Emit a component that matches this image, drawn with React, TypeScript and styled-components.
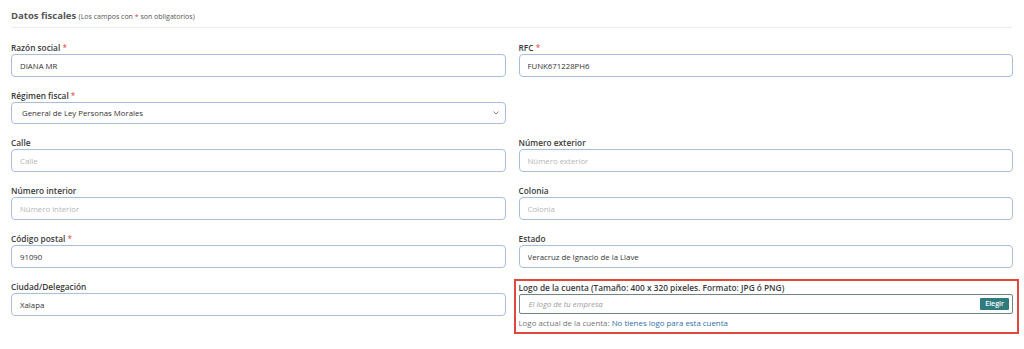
import React from "react";
import styled, { createGlobalStyle } from "styled-components";

const GlobalStyle = createGlobalStyle`
  body {
    margin: 0;
    background: #fff;
    font-family: "Open Sans", "Liberation Sans", sans-serif;
  }
`;

type FieldProps = {
  label: string;
  required?: boolean;
  value?: string;
  placeholder?: string;
};

const Field = (props: FieldProps) => {
  const { label, required, value, placeholder } = props;
  return (
    <SField>
      <SLabel>
        {label}
        {required && <SStar> *</SStar>}
      </SLabel>
      <SInput defaultValue={value} placeholder={placeholder} />
    </SField>
  );
};

const App = () => {
  return (
    <SPage>
      <GlobalStyle />
      <SHeader>
        Datos fiscales <small>(Los campos con <SStar>*</SStar> son obligatorios)</small>
      </SHeader>
      <SGrid>
        <Field label="Razón social" required value="DIANA MR" />
        <Field label="RFC" required value="FUNK671228PH6" />
        <SField>
          <SLabel>
            Régimen fiscal<SStar> *</SStar>
          </SLabel>
          <SSelectBox>
            <span>General de Ley Personas Morales</span>
            <svg width="8" height="6" viewBox="0 0 8 6">
              <path d="M1.5 1.5 L4 4 L6.5 1.5" fill="none" stroke="#888" strokeWidth="1" />
            </svg>
          </SSelectBox>
        </SField>
        <div />
        <Field label="Calle" placeholder="Calle" />
        <Field label="Número exterior" placeholder="Número exterior" />
        <Field label="Número interior" placeholder="Número interior" />
        <Field label="Colonia" placeholder="Colonia" />
        <Field label="Código postal" required value="91090" />
        <Field label="Estado" value="Veracruz de Ignacio de la Llave" />
        <Field label="Ciudad/Delegación" value="Xalapa" />
        <SHighlight>
          <SLabel>Logo de la cuenta (Tamaño: 400 x 320 pixeles. Formato: JPG ó PNG)</SLabel>
          <SFileBox>
            <span>El logo de tu empresa</span>
            <SButton>Elegir</SButton>
          </SFileBox>
          <SHelp>
            Logo actual de la cuenta: <a>No tienes logo para esta cuenta</a>
          </SHelp>
        </SHighlight>
      </SGrid>
    </SPage>
  );
};

const SPage = styled.div`
  width: 1002px;
  padding: 9px 0 0 11px;
`;

const SHeader = styled.div`
  font-size: 9.5px;
  font-weight: 700;
  color: #555;
  line-height: 14px;
  padding-bottom: 3px;
  border-bottom: 1px solid #ececec;
  margin-right: 1px;

  small {
    font-size: 7px;
    font-weight: 400;
    color: #555;
  }
`;

const SGrid = styled.div`
  display: grid;
  grid-template-columns: 1fr 1fr;
  column-gap: 13px;
  row-gap: 12px;
  margin-top: 13px;
`;

const SField = styled.div`
  display: flex;
  flex-direction: column;
`;

const SLabel = styled.label`
  font-size: 8.3px;
  font-weight: 600;
  color: #3a3a3a;
  line-height: 13px;
`;

const SStar = styled.span`
  color: #e0433b;
  font-weight: 400;
`;

const SInput = styled.input`
  box-sizing: border-box;
  height: 23px;
  border: 1px solid #a9bedc;
  border-radius: 4px;
  padding: 0 8px;
  font-family: inherit;
  font-size: 7.8px;
  color: #333;
  outline: none;

  &::placeholder {
    color: #b5b5b5;
  }
`;

const SSelectBox = styled.div`
  box-sizing: border-box;
  height: 22px;
  border: 1px solid #a9bedc;
  border-radius: 4px;
  padding: 0 5px 0 10px;
  display: flex;
  align-items: center;
  justify-content: space-between;
  font-size: 7.8px;
  color: #333;
`;

const SHighlight = styled.div`
  display: flex;
  flex-direction: column;
  margin: -1px -6px 0 -5px;
  padding: 0 4px 2px 3px;
  border: 2px solid #e2473b;
`;

const SFileBox = styled.div`
  box-sizing: border-box;
  height: 20px;
  border: 1px solid #6f8589;
  border-radius: 2px;
  padding: 0 3px 0 9px;
  display: flex;
  align-items: center;
  justify-content: space-between;
  font-size: 7.8px;
  font-style: italic;
  color: #999;
`;

const SButton = styled.button`
  height: 12px;
  padding: 0 5px;
  border: none;
  border-radius: 1px;
  background: #2f7b7d;
  color: #fff;
  font-family: inherit;
  font-size: 7px;
  font-weight: 600;
  line-height: 12px;
`;

const SHelp = styled.div`
  font-size: 7.9px;
  color: #777;
  line-height: 14px;
  margin-top: 2px;

  a {
    color: #2f6fa6;
  }
`;

export default App;
